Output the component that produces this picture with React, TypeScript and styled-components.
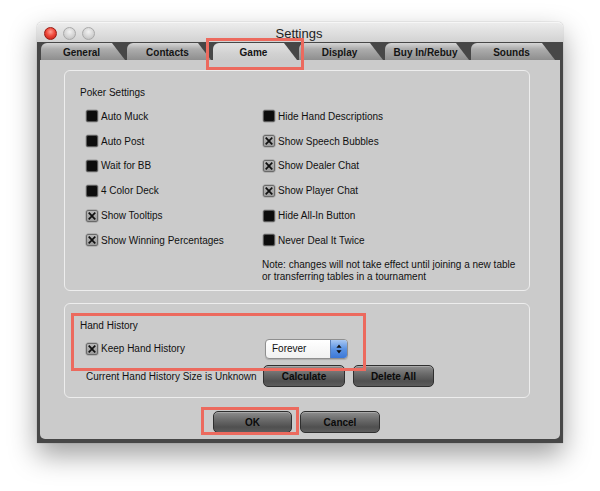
import React from "react";
import styled, { createGlobalStyle } from "styled-components";

const Global = createGlobalStyle`
  html, body { margin: 0; padding: 0; background: #ffffff; }
  body { font-family: "Liberation Sans", Arial, sans-serif; font-size: 10px; color: #111; }
`;

const Page = styled.div`
  width: 600px;
  height: 491px;
  padding: 22px 0 0 37px;
  box-sizing: border-box;
  position: relative;
  overflow: hidden;
`;

const Window = styled.div`
  width: 526px;
  border-radius: 5px 5px 0 0;
  box-shadow: 0 12px 28px rgba(0, 0, 0, 0.38), 0 0 1px rgba(0, 0, 0, 0.5);
`;

const TitleBar = styled.div`
  height: 20px;
  display: grid;
  grid-template-columns: 1fr auto 1fr;
  align-items: center;
  background: linear-gradient(#ececec, #d2d2d2);
  border-radius: 5px 5px 0 0;
  border-top: 1px solid #f6f6f6;
  box-sizing: border-box;
  padding: 0 7px;
`;

const Lights = styled.div`
  display: flex;
  gap: 6px;
  align-items: center;
  margin-top: 2px;
`;

const Light = styled.span<{ $red?: boolean }>`
  width: 13px;
  height: 13px;
  border-radius: 50%;
  box-sizing: border-box;
  border: 1px solid ${(p) => (p.$red ? "#9a1a12" : "#a9a9a9")};
  background: ${(p) =>
    p.$red
      ? "radial-gradient(circle at 50% 35%, #ff9f93 0%, #f04a3c 45%, #b8170e 100%)"
      : "radial-gradient(circle at 50% 35%, #f2f2f2 0%, #d4d4d4 55%, #b9b9b9 100%)"};
`;

const Title = styled.div`
  font-size: 13px;
  color: #1e1e1e;
  margin-top: 2px;
  margin-right: 2px;
`;

const Frame = styled.div`
  background: #474747;
  padding: 0 3px 4px 3px;
`;

const TabBar = styled.div`
  height: 18px;
  display: flex;
  gap: 2px;
  padding: 1px 0 0 1px;
  box-sizing: border-box;
  align-items: stretch;
`;

const Tab = styled.div<{ $active?: boolean }>`
  width: 84px;
  border-radius: 6px 0 0 0;
  clip-path: polygon(0 0, calc(100% - 13px) 0, 100% 100%, 0 100%);
  background: ${(p) =>
    p.$active
      ? "linear-gradient(#e2e2e2, #d2d2d2 60%, #cbcbcb)"
      : "linear-gradient(#d6d6d6, #adadad 35%, #8e8e8e)"};
  font-weight: bold;
  font-size: 10px;
  color: #141414;
  display: flex;
  align-items: center;
  justify-content: center;
  padding: 1px 3px 0 0;
  box-sizing: border-box;
`;

const Content = styled.div`
  background: #cbcbcb;
  border-radius: 0 0 5px 5px;
  padding: 10px 30px 6px 24px;
  display: flex;
  flex-direction: column;
`;

const Group = styled.div<{ $bottom: number }>`
  width: 466px;
  box-sizing: border-box;
  border: 1px solid #ededed;
  border-radius: 6px;
  padding: 16px 10px ${(p) => p.$bottom}px 15px;
`;

const GroupTitle = styled.div`
  line-height: 12px;
  height: 12px;
  margin-bottom: 5px;
`;

const PokerGrid = styled.div`
  display: grid;
  grid-template-columns: 177px 1fr;
  grid-auto-rows: 24.8px;
  padding-left: 6px;
`;

const HistoryGrid = styled.div`
  display: grid;
  grid-template-columns: 177px 1fr;
  grid-template-rows: 24.8px 30px;
  padding-left: 6px;
`;

const Cell = styled.div`
  display: flex;
  align-items: center;
  gap: 8px;
`;

const Note = styled.div`
  grid-column: 2;
  line-height: 12px;
  margin-left: -1px;
  padding-top: 6px;
`;

const CheckRow = styled.label`
  display: flex;
  align-items: center;
  gap: 3px;
  white-space: nowrap;
`;

const Mark = styled.span<{ $on?: boolean }>`
  width: 12px;
  height: 12px;
  box-sizing: border-box;
  border-radius: 2px;
  border: 1px solid ${(p) => (p.$on ? "#6a6a6a" : "#5a5a5a")};
  background: ${(p) => (p.$on ? "linear-gradient(#b8b8b8, #9c9c9c)" : "#0d0d0d")};
  box-shadow: 0 0 0 0.5px rgba(120, 120, 120, 0.6);
  display: flex;
  align-items: center;
  justify-content: center;
  flex-shrink: 0;
`;

const Select = styled.div`
  width: 83px;
  height: 20px;
  margin-left: 2px;
  box-sizing: border-box;
  border: 1px solid #8f8f8f;
  border-radius: 4px;
  background: linear-gradient(#ffffff, #f1f1f1);
  display: flex;
  align-items: stretch;
  overflow: hidden;
  box-shadow: 0 1px 1px rgba(0, 0, 0, 0.15);
`;

const SelectText = styled.span`
  flex: 1;
  display: flex;
  align-items: center;
  padding-left: 6px;
  font-size: 10px;
  color: #111;
`;

const Stepper = styled.span`
  width: 16px;
  background: linear-gradient(#a9c8f2, #5b93e3 50%, #3c78d6);
  border-left: 1px solid #5a7fb8;
  display: flex;
  align-items: center;
  justify-content: center;
`;

const Button = styled.button<{ $w: number }>`
  width: ${(p) => p.$w}px;
  height: 22px;
  box-sizing: border-box;
  border: 1px solid #2f2f2f;
  border-radius: 5px;
  background: linear-gradient(#8e8e8e, #6a6a6a 40%, #505050 75%, #5c5c5c);
  font-family: "Liberation Sans", Arial, sans-serif;
  font-weight: bold;
  font-size: 10px;
  color: #0a0a0a;
  padding: 0;
  box-shadow: inset 0 1px 0 rgba(255, 255, 255, 0.25);
`;

const ButtonRow = styled.div`
  display: flex;
  justify-content: center;
  gap: 8px;
  padding-right: 1px;
  margin-top: 13px;
`;

const Spacer = styled.div`
  height: 12px;
`;

const Highlight = styled.div<{ $x: number; $y: number; $w: number; $h: number }>`
  position: absolute;
  left: ${(p) => p.$x}px;
  top: ${(p) => p.$y}px;
  width: ${(p) => p.$w}px;
  height: ${(p) => p.$h}px;
  border: 3px solid #ec6a5e;
  box-sizing: border-box;
  pointer-events: none;
`;

const XMark = () => (
  <svg width="8" height="8" viewBox="0 0 8 8">
    <path d="M1.3 1.2 L6.7 6.8 M6.7 1.2 L1.3 6.8" stroke="#111" strokeWidth="1.7" strokeLinecap="square" />
  </svg>
);

const Check = ({ on, label }: { on?: boolean; label: string }) => (
  <CheckRow>
    <Mark $on={on}>{on ? <XMark /> : null}</Mark>
    <span>{label}</span>
  </CheckRow>
);

const left: [string, boolean][] = [
  ["Auto Muck", false],
  ["Auto Post", false],
  ["Wait for BB", false],
  ["4 Color Deck", false],
  ["Show Tooltips", true],
  ["Show Winning Percentages", true],
];
const right: [string, boolean][] = [
  ["Hide Hand Descriptions", false],
  ["Show Speech Bubbles", true],
  ["Show Dealer Chat", true],
  ["Show Player Chat", true],
  ["Hide All-In Button", false],
  ["Never Deal It Twice", false],
];

const tabs = ["General", "Contacts", "Game", "Display", "Buy In/Rebuy", "Sounds"];

export default function App() {
  return (
    <Page>
      <Global />
      <Window>
        <TitleBar>
          <Lights>
            <Light $red />
            <Light />
            <Light />
          </Lights>
          <Title>Settings</Title>
          <div />
        </TitleBar>
        <Frame>
          <TabBar>
            {tabs.map((t) => (
              <Tab key={t} $active={t === "Game"}>
                {t}
              </Tab>
            ))}
          </TabBar>
          <Content>
            <Group $bottom={12}>
              <GroupTitle>Poker Settings</GroupTitle>
              <PokerGrid>
                {left.map((l, i) => (
                  <React.Fragment key={l[0]}>
                    <Cell>
                      <Check label={l[0]} on={l[1]} />
                    </Cell>
                    <Cell>
                      <Check label={right[i][0]} on={right[i][1]} />
                    </Cell>
                  </React.Fragment>
                ))}
                <Note>
                  Note: changes will not take effect until joining a new table
                  <br />
                  or transferring tables in a tournament
                </Note>
              </PokerGrid>
            </Group>
            <Spacer />
            <Group $bottom={6}>
              <GroupTitle>Hand History</GroupTitle>
              <HistoryGrid>
                <Cell>
                  <Check label="Keep Hand History" on />
                </Cell>
                <Cell>
                  <Select>
                    <SelectText>Forever</SelectText>
                    <Stepper>
                      <svg width="6" height="10" viewBox="0 0 6 10">
                        <path d="M3 0.5 L5.6 3.8 H0.4 Z M3 9.5 L5.6 6.2 H0.4 Z" fill="#111" />
                      </svg>
                    </Stepper>
                  </Select>
                </Cell>
                <Cell>Current Hand History Size is Unknown</Cell>
                <Cell>
                  <Button $w={82}>Calculate</Button>
                  <Button $w={81}>Delete All</Button>
                </Cell>
              </HistoryGrid>
            </Group>
            <ButtonRow>
              <Button $w={79}>OK</Button>
              <Button $w={80}>Cancel</Button>
            </ButtonRow>
          </Content>
        </Frame>
      </Window>
      <Highlight $x={206} $y={38} $w={98} $h={32} />
      <Highlight $x={71} $y={313} $w={295} $h={58} />
      <Highlight $x={201} $y={407} $w={98} $h={28} />
    </Page>
  );
}
